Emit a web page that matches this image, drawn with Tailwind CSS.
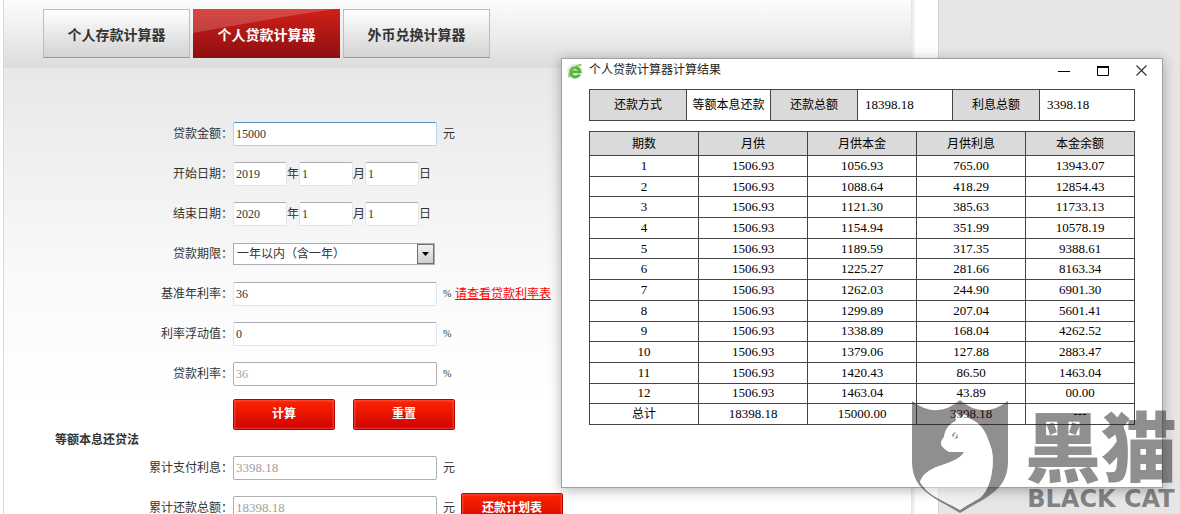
<!DOCTYPE html>
<html lang="zh-CN">
<head>
<meta charset="utf-8">
<meta name="viewport" content="width=device-width, initial-scale=1">
<title>个人贷款计算器</title>
<script src="https://cdn.jsdelivr.net/npm/@tailwindcss/browser@4"></script>
</head>
<body class="h-screen overflow-hidden bg-white font-['Liberation_Serif','Noto_Sans_CJK_SC',sans-serif] text-xs text-[#333]">
<div class="relative flex min-h-full pl-[3px]">
  <main class="flex-1 border-l border-[#d8d8d8]">
    <nav class="flex h-[68px] gap-[3px] bg-linear-to-b from-[#fdfdfd] to-[#dcdcdc] pt-[9px] pl-[39px] font-['Noto_Sans_CJK_SC',sans-serif] text-sm font-bold">
      <button class="h-[49px] w-[147px] border border-[#bdbdbd] border-b-[#999] bg-linear-to-b from-white to-[#d3d3d3]">个人存款计算器</button>
      <button class="relative h-[49px] w-[147px] bg-linear-to-b from-[#d0201a] to-[#8e0f11] text-white"><svg class="absolute inset-0 size-full" viewBox="0 0 147 49" preserveAspectRatio="none" aria-hidden="true"><path d="M0 0h142Q80 9 0 24z" fill="#fff" opacity=".18"/></svg><span class="relative">个人贷款计算器</span></button>
      <button class="h-[49px] w-[147px] border border-[#bdbdbd] border-b-[#999] bg-linear-to-b from-white to-[#d3d3d3]">外币兑换计算器</button>
    </nav>
    <form class="bg-linear-to-b from-[#e8e8e8] via-[#f9f9f9] via-[200px] to-white to-[330px] pt-[46px]">
      <div class="flex h-10 items-center">
        <label for="amount" class="w-[229px] text-right">贷款金额：</label>
        <input id="amount" value="15000" class="h-6 w-[204px] rounded-xs border border-[#b5d4ea] border-t-[#5794bf] bg-white px-0.5">
        <span class="ml-1.5">元</span>
      </div>
      <div class="flex h-10 items-center">
        <label for="y1" class="w-[229px] text-right">开始日期：</label>
        <input id="y1" value="2019" class="h-6 w-[54px] rounded-xs border border-[#e1e4ea] border-t-[#abadb3] bg-white px-0.5"><span>年</span>
        <input id="m1" aria-label="开始月" value="1" class="h-6 w-[54px] rounded-xs border border-[#e1e4ea] border-t-[#abadb3] bg-white px-0.5"><span>月</span>
        <input id="d1" aria-label="开始日" value="1" class="h-6 w-[54px] rounded-xs border border-[#e1e4ea] border-t-[#abadb3] bg-white px-0.5"><span>日</span>
      </div>
      <div class="flex h-10 items-center">
        <label for="y2" class="w-[229px] text-right">结束日期：</label>
        <input id="y2" value="2020" class="h-6 w-[54px] rounded-xs border border-[#e1e4ea] border-t-[#abadb3] bg-white px-0.5"><span>年</span>
        <input id="m2" aria-label="结束月" value="1" class="h-6 w-[54px] rounded-xs border border-[#e1e4ea] border-t-[#abadb3] bg-white px-0.5"><span>月</span>
        <input id="d2" aria-label="结束日" value="1" class="h-6 w-[54px] rounded-xs border border-[#e1e4ea] border-t-[#abadb3] bg-white px-0.5"><span>日</span>
      </div>
      <div class="flex h-10 items-center">
        <label for="term" class="w-[229px] text-right">贷款期限：</label>
        <span class="relative">
          <select id="term" class="block h-[22px] w-[202px] appearance-none border border-[#abadb3] bg-white pl-[3px]"><option>一年以内（含一年）</option></select>
          <span class="pointer-events-none absolute inset-y-px right-px flex w-[17px] items-center justify-center border border-[#707070] bg-linear-to-b from-[#f2f2f2] to-[#cfcfcf]"><svg width="7" height="4" viewBox="0 0 7 4" aria-hidden="true"><path d="M0 0h7L3.500 4z"/></svg></span>
        </span>
      </div>
      <div class="flex h-10 items-center">
        <label for="base" class="w-[229px] text-right">基准年利率：</label>
        <input id="base" value="36" class="h-6 w-[204px] rounded-xs border border-[#e1e4ea] border-t-[#abadb3] bg-white px-0.5">
        <span class="ml-1.5 w-3 text-[10px]">%</span><a href="#" class="text-[#f00] underline">请查看贷款利率表</a>
      </div>
      <div class="flex h-10 items-center">
        <label for="float" class="w-[229px] text-right">利率浮动值：</label>
        <input id="float" value="0" class="h-6 w-[204px] rounded-xs border border-[#e1e4ea] border-t-[#abadb3] bg-white px-0.5">
        <span class="ml-1.5 text-[10px]">%</span>
      </div>
      <div class="flex h-10 items-center">
        <label for="rate" class="w-[229px] text-right">贷款利率：</label>
        <input id="rate" value="36" disabled class="h-6 w-[204px] rounded-xs border border-[#afafaf] bg-white px-0.5 text-[#a0a0a0]">
        <span class="ml-1.5 text-[10px]">%</span>
      </div>
      <div class="mt-[5px] flex gap-[18px] pl-[229px] font-bold text-white">
        <button type="button" class="h-[31px] w-[102px] rounded-xs border border-[#b80000] bg-linear-to-b from-[#ff2200] to-[#d00000] pb-0.5 inset-shadow-[0_0_3px_#ff8070]">计算</button>
        <button type="button" class="h-[31px] w-[102px] rounded-xs border border-[#b80000] bg-linear-to-b from-[#ff2200] to-[#d00000] pb-0.5 inset-shadow-[0_0_3px_#ff8070]">重置</button>
      </div>
      <h2 class="flex h-[18px] items-end pl-[51px] leading-4 font-bold">等额本息还贷法</h2>
      <div class="flex h-10 items-center">
        <label for="interest" class="w-[229px] text-right">累计支付利息：</label>
        <input id="interest" value="3398.18" disabled class="h-6 w-[204px] rounded-xs border border-[#afafaf] bg-white px-0.5 text-[13px] text-[#a0a0a0]">
        <span class="ml-1.5">元</span>
      </div>
      <div class="flex h-10 items-center">
        <label for="total" class="w-[229px] text-right">累计还款总额：</label>
        <input id="total" value="18398.18" disabled class="h-6 w-[204px] rounded-xs border border-[#afafaf] bg-white px-0.5 text-[13px] text-[#a0a0a0]">
        <span class="ml-1.5">元</span>
        <button type="button" class="ml-1.5 h-[31px] w-[102px] rounded-xs border border-[#b80000] bg-linear-to-b from-[#ff2200] to-[#d00000] font-bold text-white inset-shadow-[0_0_3px_#ff8070]">还款计划表</button>
      </div>
    </form>
  </main>
  <div class="w-[27px] bg-linear-to-r from-[#e2e2e2] to-white to-[5px]"></div>
  <aside class="w-[242px] border-l border-[#d5d5d5] bg-[#e6e6e6]"></aside>
</div>

<section role="dialog" aria-labelledby="dlg" class="absolute top-[58px] right-[17px] left-[561px] h-[430px] border border-[#a0a0a0] bg-white px-[27px] text-black shadow-[0_2px_12px_rgba(0,0,0,0.3)]">
  <header class="-ml-[22px] flex h-6 items-center">
    <svg width="16" height="17" viewBox="0 0 16 17" aria-hidden="true"><circle cx="8" cy="8.500" r="7.800" fill="#e4e8e2"/><path d="M12.300 11.600A4.700 4.700 0 1 1 12.900 8.900H5" fill="none" stroke="#4fb52e" stroke-width="2.800"/><path d="M2.300 14.500C.5 10.500 7 3 14.500 1.500" fill="none" stroke="#6ccb40" stroke-width="1.300"/></svg>
    <h1 id="dlg" class="ml-1.5 flex-1 pb-0.5 text-xs text-[#222]">个人贷款计算器计算结果</h1>
    <div class="-mr-[13px] flex gap-[26px]">
      <button aria-label="最小化"><svg width="13" height="13" viewBox="0 0 13 13"><path d="M0 6.500h12" stroke="#000"/></svg></button>
      <button aria-label="最大化"><svg width="13" height="13" viewBox="0 0 13 13"><path d="M.5 1.500h11v9H.5z" fill="none" stroke="#000"/><path d="M0 2h12" stroke="#000" stroke-width="2"/></svg></button>
      <button aria-label="关闭"><svg width="12" height="13" viewBox="0 0 12 13"><path d="M.5 .5l10 10m0-10l-10 10" stroke="#333" stroke-width="1.200"/></svg></button>
    </div>
  </header>
  <table class="mt-1.5 w-full table-fixed border-collapse border border-[#666]">
    <colgroup><col class="w-[97px]"><col class="w-[84px]"><col class="w-[87px]"><col class="w-[95px]"><col class="w-[87px]"><col></colgroup>
    <tbody><tr class="h-[31px]">
      <th class="border border-[#444] bg-[#dadada] font-normal">还款方式</th><td class="border border-[#444] text-center">等额本息还款</td>
      <th class="border border-[#444] bg-[#dadada] font-normal">还款总额</th><td class="border border-[#444] pl-[7px] text-[13px]">18398.18</td>
      <th class="border border-[#444] bg-[#dadada] font-normal">利息总额</th><td class="border border-[#444] pl-[7px] text-[13px]">3398.18</td>
    </tr></tbody>
  </table>
  <table class="mt-2.5 h-[294px] w-full table-fixed border-collapse border border-[#666] text-center text-[13px] leading-4 [&_td]:border [&_td]:border-[#444] [&_td]:p-0 [&_th]:border [&_th]:border-[#444] [&_th]:p-0 [&_th]:text-xs [&_th]:font-normal">
    <thead><tr class="h-6 bg-[#dadada]"><th>期数</th><th>月供</th><th>月供本金</th><th>月供利息</th><th>本金余额</th></tr></thead>
    <tbody>
      <tr><td>1</td><td>1506.93</td><td>1056.93</td><td>765.00</td><td>13943.07</td></tr>
      <tr><td>2</td><td>1506.93</td><td>1088.64</td><td>418.29</td><td>12854.43</td></tr>
      <tr><td>3</td><td>1506.93</td><td>1121.30</td><td>385.63</td><td>11733.13</td></tr>
      <tr><td>4</td><td>1506.93</td><td>1154.94</td><td>351.99</td><td>10578.19</td></tr>
      <tr><td>5</td><td>1506.93</td><td>1189.59</td><td>317.35</td><td>9388.61</td></tr>
      <tr><td>6</td><td>1506.93</td><td>1225.27</td><td>281.66</td><td>8163.34</td></tr>
      <tr><td>7</td><td>1506.93</td><td>1262.03</td><td>244.90</td><td>6901.30</td></tr>
      <tr><td>8</td><td>1506.93</td><td>1299.89</td><td>207.04</td><td>5601.41</td></tr>
      <tr><td>9</td><td>1506.93</td><td>1338.89</td><td>168.04</td><td>4262.52</td></tr>
      <tr><td>10</td><td>1506.93</td><td>1379.06</td><td>127.88</td><td>2883.47</td></tr>
      <tr><td>11</td><td>1506.93</td><td>1420.43</td><td>86.50</td><td>1463.04</td></tr>
      <tr><td>12</td><td>1506.93</td><td>1463.04</td><td>43.89</td><td>00.00</td></tr>
      <tr><td class="text-xs">总计</td><td>18398.18</td><td>15000.00</td><td>3398.18</td><td>---</td></tr>
    </tbody>
  </table>
</section>

<div class="pointer-events-none absolute top-[399px] right-[3px] flex items-start gap-4 text-[#231f20] opacity-50">
  <svg width="98" height="115" viewBox="0 0 98 115" aria-hidden="true">
    <path fill-rule="evenodd" fill="currentColor" d="M1 2Q26 21 49 1Q72 21 97 2V62C97 92 75 98 49 114C23 98 1 92 1 62ZM44 13L45 22C38 25 34 30 33 38C30 42 29 45 31 47Q36 53 40 53H53C46 67 15 64 9 83C17 97 32 101 49 111C58 105 66 101 70 98C83 86 84 55 79 46C75 32 69 23 57 19L54 14L50 19Z"/>
    <path fill="#fff" fill-opacity=".85" d="M44 13L45 22C38 25 34 30 33 38C30 42 29 45 31 47Q36 53 40 53H53C46 67 15 64 9 83C17 97 32 101 49 111C58 105 66 101 70 98C83 86 84 55 79 46C75 32 69 23 57 19L54 14L50 19Z"/>
    <path fill="currentColor" d="M41 37q1-5 5-3q-4 0-3 4zM46 34l1 5l-4 1q3-2 3-6z"/>
  </svg>
  <div class="flex flex-col items-center font-['Noto_Sans_CJK_SC',sans-serif]">
    <span class="text-[76px] leading-[88px] font-black">黑猫</span>
    <span class="font-['DejaVu_Sans',sans-serif] text-2xl leading-6 font-bold whitespace-nowrap">BLACK CAT</span>
  </div>
</div>
</body>
</html>
